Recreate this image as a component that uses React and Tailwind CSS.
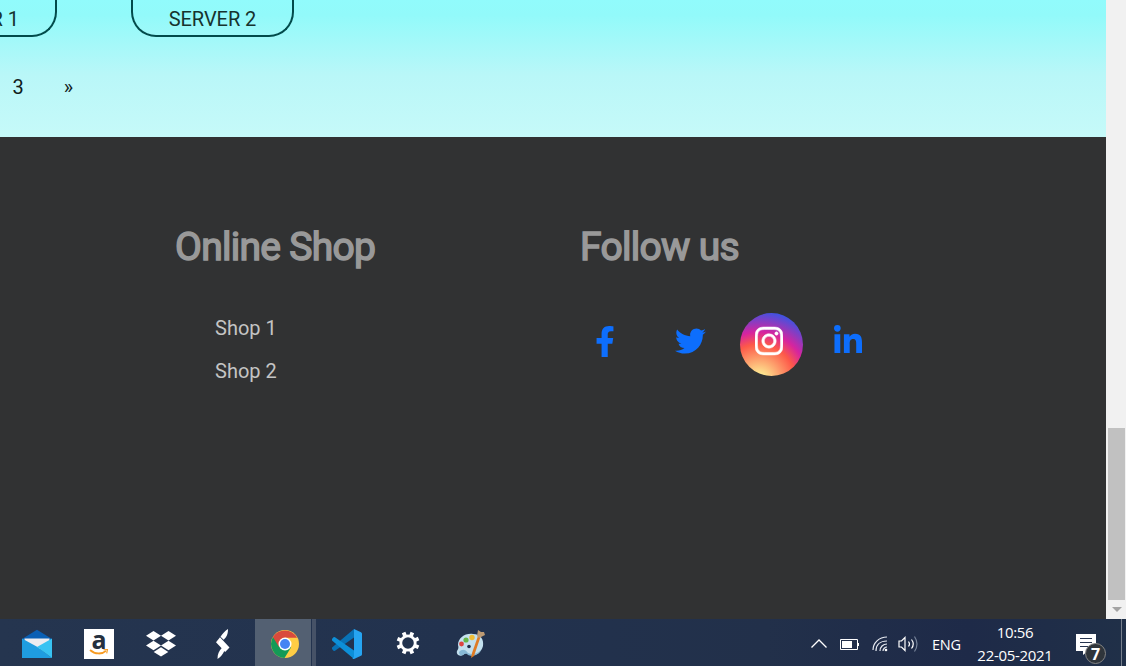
import React from "react";
import { FaFacebookF, FaTwitter, FaInstagram, FaLinkedinIn } from "react-icons/fa";

function Pager() {
  return (
    <section className="h-[137px] overflow-hidden bg-[linear-gradient(180deg,#91fbfc_0px,#92fafa_15px,#b9f7f8_75px,#c6faf9_137px)] text-[20px] leading-[22px] font-normal text-black">
      <div className="flex h-[37px] gap-[74px] overflow-hidden text-[#16332e]">
        <div className="flex h-[37px] w-[57px] items-start justify-end rounded-br-[25px] border-r-2 border-b-2 border-[#024b4b] pt-[8px] pr-[36px] tracking-[-0.05px] whitespace-nowrap">
          SERVER 1
        </div>
        <div className="flex h-[37px] w-[163px] items-start justify-center rounded-b-[25px] border-x-2 border-b-2 border-[#024b4b] pt-[8px] tracking-[-0.05px]">
          SERVER 2
        </div>
      </div>
      <div className="flex gap-[40px] pt-[39px] pl-[12.5px] text-[#101c1c]">
        <span>3</span>
        <span>»</span>
      </div>
    </section>
  );
}

function FooterHeading({ children }) {
  return (
    <h2 className="pt-px text-[39px] leading-[47px] font-normal tracking-[-0.7px] text-[#999] [-webkit-text-stroke:1.5px_#999]">
      {children}
    </h2>
  );
}

function Footer() {
  return (
    <footer className="flex h-[482px] bg-[#313233] pt-[86px] pl-[175px]">
      <div className="w-[405px]">
        <FooterHeading>Online Shop</FooterHeading>
        <ul className="pt-[42px] pl-[40px] text-[20px] leading-[30px] text-[#c4c4c4]">
          <li className="mb-[13px]">Shop 1</li>
          <li>Shop 2</li>
        </ul>
      </div>
      <div>
        <FooterHeading>Follow us</FooterHeading>
        <div className="flex pt-[42px] text-[#0d6efd]">
          <FaFacebookF className="mt-[12.5px] ml-[14.5px] h-[31.5px] w-[20px]" />
          <FaTwitter className="mt-[12px] ml-[60.5px] h-[32px] w-[31px]" />
          <div className="ml-[34px] h-[63px] w-[63px] rounded-full bg-[radial-gradient(circle_at_30%_107%,#fdf497_0%,#fdf497_5%,#fd5949_45%,#d6249f_60%,#285aeb_90%)] pt-[12px] pl-[15px] text-white">
            <FaInstagram className="h-[32px] w-[28px] [stroke-width:8px]" />
          </div>
          <FaLinkedinIn className="mt-[12px] ml-[31px] h-[32px] w-[28px]" />
        </div>
      </div>
    </footer>
  );
}

function ScrollBar() {
  return (
    <div className="flex w-[20px] flex-col bg-[#f1f1f1] pt-[428px]">
      <div className="ml-[2px] h-[172px] w-[17px] bg-[#c1c1c1]" />
      <svg className="mt-[7px] ml-[6px] h-[5px] w-[10px]" viewBox="0 0 10 5">
        <path d="M0 0h10L5 5z" fill="#a3a3a3" />
      </svg>
    </div>
  );
}

function MailIcon() {
  return (
    <svg className="h-[30px] w-[30px]" viewBox="0 0 30 30">
      <path d="M0 10 15 .8 30 10v4H0z" fill="#0a5fb4" />
      <path d="M2.500 9.500h25V20h-25z" fill="#ececf0" />
      <path d="M0 9.500 15.500 18 30 29H0z" fill="#1f9de0" />
      <path d="M30 9.500V29L15 18z" fill="#38c3f2" />
    </svg>
  );
}

function AmazonIcon() {
  return (
    <div className="flex h-[30px] w-[30px] flex-col items-center bg-white text-[#25303e]">
      <span className="h-[20px] font-['Open_Sans',sans-serif] text-[25px] leading-[20px] font-bold">a</span>
      <svg className="h-[7px] w-[20px]" viewBox="0 0 20 7">
        <path d="M1 1c5 4.500 12 4.500 16 .8" stroke="#f79b22" strokeWidth="1.800" fill="none" />
        <path d="m14.500.800 4-.3-.8 3.800" stroke="#f79b22" strokeWidth="1.100" fill="none" />
      </svg>
    </div>
  );
}

function DropboxIcon() {
  return (
    <svg className="h-[26px] w-[30px]" viewBox="0 0 30 26" fill="#fff">
      <path d="m7.500 0 7.500 4.800-7.500 4.800L0 4.800zM22.500 0 30 4.800l-7.500 4.800L15 4.800zM7.500 9.700l7.500 4.800-7.500 4.800L0 14.500zM22.500 9.700l7.500 4.800-7.500 4.800-7.500-4.800zM15 16.200l7.300 4.700L15 25.600l-7.300-4.700z" />
    </svg>
  );
}

function SwiftBoltIcon() {
  return (
    <svg className="h-[30px] w-[14px]" viewBox="0 0 14 30" fill="#fff">
      <path d="M12 0C12 5 11 7.500 7.700 10.800L4.500 7.800C6.500 4.500 9 2 12 0zM4 8.300 13.500 18.500 9.200 23 0 13.200zM8.500 21.500C7 25 5 28 1.500 30 1.500 25 3 22 5.800 19z" />
    </svg>
  );
}

function ChromeIcon() {
  return (
    <svg className="h-[28px] w-[28px]" viewBox="0 0 28 28">
      <circle cx="14" cy="14" r="14" fill="#ffcd45" />
      <path d="M1.900 7A14 14 0 0 0 13.500 28L20 17.500 14 14z" fill="#149a57" />
      <path d="M1.900 7A14 14 0 0 1 26.100 7.700H14L8 17z" fill="#d94a3d" />
      <circle cx="14" cy="14" r="6.500" fill="#fff" />
      <circle cx="14" cy="14" r="5" fill="#4584f3" />
    </svg>
  );
}

function CodeIcon() {
  return (
    <svg className="h-[30px] w-[30px]" viewBox="0 0 30 30">
      <path d="M.3 18.200 22 0v8.500L3 21.800q-.8.500-1.500-.1L.4 20.600Q-.5 19.500.3 18.200z" fill="#0872b7" />
      <path d="M.3 11.800 22 30v-8.500L3 8.200q-.8-.5-1.500.1L.4 9.400q-.9 1.100-.1 2.400z" fill="#0d8fd8" />
      <path d="m22 0 7 3.200q1 .5 1 1.600v20.400q0 1.100-1 1.600L22 30q-1 .3-1.500-.6L22 28z" fill="#26a5f2" />
    </svg>
  );
}

function GearIcon() {
  return (
    <svg className="h-[24px] w-[24px]" viewBox="-12 -12 24 24" fill="none" stroke="#fff">
      <circle r="7.200" strokeWidth="2.800" />
      <g strokeWidth="3.800" transform="rotate(22.500)">
        <path d="M0-11.400v4M0 7.400v4M-11.400 0h4M7.400 0h4M-8.100-8.100l2.500 2.500M5.600 5.600l2.500 2.500M-8.100 8.100l2.500-2.500M5.600-5.600l2.500-2.500" />
      </g>
    </svg>
  );
}

function PaintIcon() {
  return (
    <svg className="h-[30px] w-[30px]" viewBox="0 0 30 30">
      <path d="M7 26c-4 2-7-1-6-4 1-2 2-3 1-6C2 9 9 4 17 5c8 0 11 6 10 12-2 7-7 10-13 9-3-1-2-4-7 0z" fill="#c3e0ee" />
      <path d="M3 23c3-3 6-3 9 1 4 2 9 1 13-3-2 5-9 7-13 5-2-2-3-1-5 0-2 1-4 0-4-3z" fill="#87b9d5" />
      <circle cx="13" cy="17.500" r="1.800" fill="#20304a" />
      <circle cx="5.500" cy="15" r="2.400" fill="#dc4540" />
      <circle cx="10" cy="11" r="2.600" fill="#65b648" />
      <circle cx="16" cy="8.500" r="2.700" fill="#efbd36" />
      <path d="m22 7 2.500 1-6.500 19-3 2 1-5z" fill="#df7b24" />
      <path d="m22 1 3 2 3 0 1 3-4 2-2 1-2-2z" fill="#bd9a73" />
    </svg>
  );
}

function TrayIcons() {
  return (
    <>
      <svg className="mt-[20px] h-[9px] w-[16px]" viewBox="0 0 16 9" fill="none" stroke="#fff" strokeWidth="1.300">
        <path d="m.5 8.500 7.500-7.500 7.500 7.500" />
      </svg>
      <svg className="mt-[20px] ml-[13px] h-[11px] w-[19px]" viewBox="0 0 19 11">
        <path d="M.5.500h17v10H.500zM18.500 4v3" fill="none" stroke="#fff" />
        <path d="M2 2h10v7H2z" fill="#fff" />
      </svg>
      <svg className="mt-[17px] ml-[13px] h-[17px] w-[17px]" viewBox="0 0 17 17" fill="none" stroke="#e8ecf3">
        <path d="M1 14C1 7 7 1 15 1M4 15C4 9 8 5 15 5M8 15C8 11 11 8 15 8M11 15c0-2 2-4 4-4" strokeWidth="1.200" />
        <circle cx="14" cy="14" r="1.300" fill="#fff" stroke="none" />
      </svg>
      <svg className="mt-[16px] ml-[9px] h-[18px] w-[21px]" viewBox="0 0 21 18" fill="none" stroke="#fff" strokeWidth="1.200">
        <path d="M1 6h2.500L7 2.500v13L3.500 12H1zM10.500 6.500q2 2.500 0 5M13.500 4.500q3.500 4.500 0 9" />
        <path d="M16.500 1.500q5 7.500 0 15" stroke="#78859b" />
      </svg>
    </>
  );
}

function NotificationIcon() {
  return (
    <div className="relative mt-[15px] ml-[22px] h-[32px] w-[31px]">
      <svg className="h-[22px] w-[21px]" viewBox="0 0 21 22">
        <path d="M0 0h20v17h-8l-5 4v-4H0z" fill="#fff" />
        <path d="M4 4.500h12M4 8.500h12M4 12.500h8" stroke="#27344f" />
      </svg>
      <span className="absolute top-[9px] left-[9px] flex h-[21px] w-[21px] items-center justify-center rounded-full border border-[#858585] bg-[#2f353b] font-['Open_Sans',sans-serif] text-[16px] leading-none font-bold text-white">
        7
      </span>
    </div>
  );
}

function Taskbar() {
  return (
    <div className="flex h-[47px] items-start bg-[linear-gradient(90deg,#25354f_0%,#22324e_40%,#22304a_68%,#1e2a48_86%,#203048_100%)] font-['Open_Sans',sans-serif] text-white">
      <div className="mt-[10px] ml-[22px]"><MailIcon /></div>
      <div className="mt-[10px] ml-[32px]"><AmazonIcon /></div>
      <div className="mt-[12px] ml-[32px]"><DropboxIcon /></div>
      <div className="mt-[10px] ml-[40px]"><SwiftBoltIcon /></div>
      <div className="ml-[25px] h-[47px] w-[56px] bg-[#536072] pt-[11px] pl-[16px]"><ChromeIcon /></div>
      <div className="ml-px h-[47px] w-[4px] bg-[#465267]" />
      <div className="mt-[10px] ml-[16px]"><CodeIcon /></div>
      <div className="mt-[12px] ml-[34px]"><GearIcon /></div>
      <div className="mt-[10px] ml-[36px]"><PaintIcon /></div>
      <div className="ml-auto flex items-start">
        <TrayIcons />
        <span className="mt-[16px] ml-[13px] w-[29px] text-[14.5px] leading-[20px] tracking-[-0.2px]">ENG</span>
        <div className="ml-[15px] w-[78px] pt-[2px] text-center text-[15px] leading-[23px] tracking-[-0.3px] whitespace-nowrap">
          <div>10:56</div>
          <div>22-05-2021</div>
        </div>
        <NotificationIcon />
        <div className="ml-[14px] h-[47px] w-[5px] border-l border-[#77808d]" />
      </div>
    </div>
  );
}

export default function App() {
  return (
    <div className="flex h-[666px] w-[1126px] flex-col overflow-hidden font-['Roboto',sans-serif]">
      <div className="flex h-[619px]">
        <main className="w-[1106px]">
          <Pager />
          <Footer />
        </main>
        <ScrollBar />
      </div>
      <Taskbar />
    </div>
  );
}
